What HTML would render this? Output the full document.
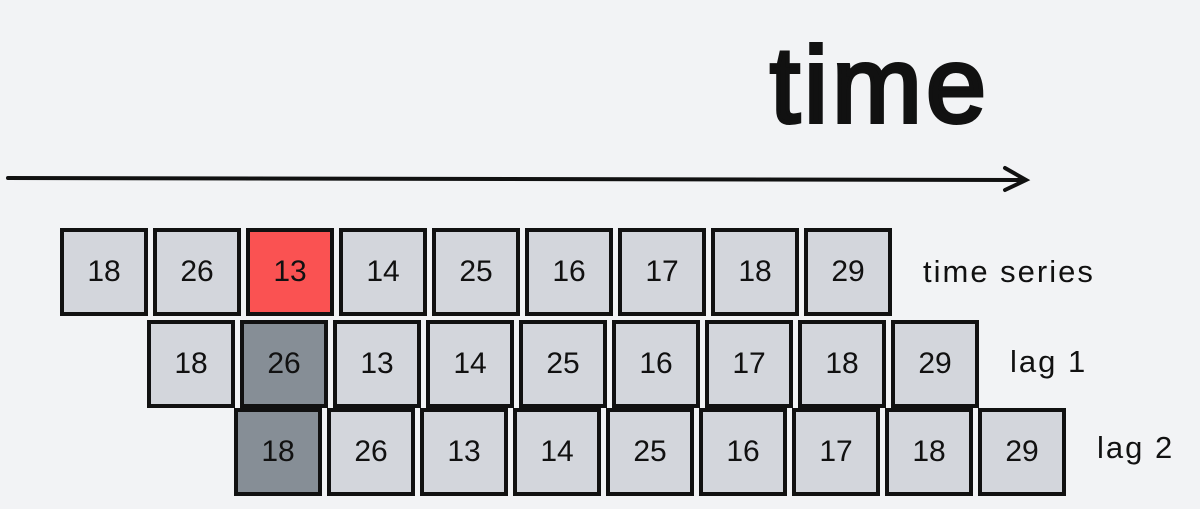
<!DOCTYPE html>
<html><head><style>
body{margin:0;width:1200px;height:509px;background:#f2f3f5;position:relative;overflow:hidden;font-family:"Liberation Sans",sans-serif}
.b{position:absolute;width:80px;height:80px;border:4px solid #111;background:#d3d6dc;display:flex;align-items:center;justify-content:center;font-size:30px;color:#111}
.r{background:#fa5252}.d{background:#868e96}
.l{position:absolute;font-size:31px;color:#111;letter-spacing:2px}
</style></head><body>
<div class="l" style="left:770px;top:22px;font-size:108px;font-weight:normal;-webkit-text-stroke:4px #111;letter-spacing:4px">time</div>
<svg style="position:absolute;left:0;top:0" width="1200" height="509"><path d="M8 178 L1025 180 M1005 168 L1026 180 L1005 190" stroke="#111" stroke-width="4" fill="none" stroke-linecap="round"/></svg>
<div id="c"></div>
<div class="l" style="left:923px;top:254px">time series</div>
<div class="l" style="left:1010px;top:344px">lag 1</div>
<div class="l" style="left:1097px;top:430px">lag 2</div>
<script>
var v=[18,26,13,14,25,16,17,18,29],rows=[[60,228],[147,320],[234,408]],h='';
rows.forEach(function(r,ri){v.forEach(function(n,i){var c='';if(ri==0&&i==2)c=' r';if(ri==1&&i==1)c=' d';if(ri==2&&i==0)c=' d';
h+='<div class="b'+c+'" style="left:'+(r[0]+i*93)+'px;top:'+r[1]+'px">'+n+'</div>';});});
document.getElementById('c').innerHTML=h;
</script>
</body></html>
